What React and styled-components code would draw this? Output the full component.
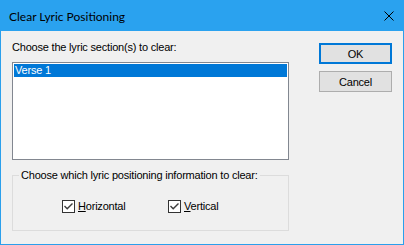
import styled, { createGlobalStyle } from "styled-components";

const GlobalStyle = createGlobalStyle`
  html, body {
    margin: 0;
    padding: 0;
    background: #ffffff;
  }
`;

function Check() {
  return (
    <svg width="11" height="11" viewBox="0 0 11 11">
      <path d="M1.5 5 L4.2 7.7 L9.5 2.4" stroke="#3c3c3c" strokeWidth="1.4" fill="none" />
    </svg>
  );
}

export default function App() {
  return (
    <>
      <GlobalStyle />
      <Window>
        <TitleBar>
          <Title>Clear Lyric Positioning</Title>
          <CloseButton aria-label="Close">
            <svg width="10" height="10" viewBox="0 0 10 10">
              <path d="M0.5 0.5 L9.5 9.5 M9.5 0.5 L0.5 9.5" stroke="#000" strokeWidth="1" fill="none" />
            </svg>
          </CloseButton>
        </TitleBar>
        <Body>
          <Main>
            <Label>Choose the lyric section(s) to clear:</Label>
            <ListBox>
              <ListItem $selected>Verse 1</ListItem>
            </ListBox>
            <GroupBox>
              <Legend>Choose which lyric positioning information to clear:</Legend>
              <CheckRow>
                <CheckItem>
                  <CheckBox>
                    <Check />
                  </CheckBox>
                  <span><u>H</u>orizontal</span>
                </CheckItem>
                <CheckItem>
                  <CheckBox>
                    <Check />
                  </CheckBox>
                  <span><u>V</u>ertical</span>
                </CheckItem>
              </CheckRow>
            </GroupBox>
          </Main>
          <Buttons>
            <Button $default>OK</Button>
            <Button>Cancel</Button>
          </Buttons>
        </Body>
      </Window>
    </>
  );
}

const Window = styled.div`
  width: 404px;
  height: 245px;
  box-sizing: border-box;
  border: 1px solid #2a9fec;
  border-top: none;
  background: #f0f0f0;
  display: flex;
  flex-direction: column;
  font-family: "Liberation Sans", Arial, sans-serif;
  font-size: 11px;
  letter-spacing: -0.2px;
  color: #000;
`;

const TitleBar = styled.div`
  height: 31px;
  margin: 0 -1px;
  background: #2aa2ef;
  display: flex;
  align-items: center;
  justify-content: space-between;
  padding: 0 10px 0 9px;
  box-sizing: border-box;
`;

const Title = styled.div`
  font-family: Lato, "Noto Sans", sans-serif;
  font-size: 12px;
  letter-spacing: 0;
  padding-top: 2px;
  color: #000;
`;

const CloseButton = styled.div`
  width: 10px;
  height: 10px;
  display: flex;
  margin-top: 1px;
`;

const Body = styled.div`
  flex: 1;
  display: flex;
  padding: 10px 0 0 11px;
`;

const Main = styled.div`
  width: 277px;
  display: flex;
  flex-direction: column;
`;

const Label = styled.div`
  line-height: 13px;
  height: 13px;
  margin-bottom: 8px;
`;

const ListBox = styled.div`
  height: 98px;
  box-sizing: border-box;
  border: 1px solid #828790;
  background: #ffffff;
  padding: 1px;
`;

const ListItem = styled.div`
  height: 13px;
  line-height: 13px;
  padding-left: 1px;
  background: ${(props) => (props.$selected ? "#0078d7" : "transparent")};
  color: ${(props) => (props.$selected ? "#ffffff" : "#000000")};
`;

const GroupBox = styled.fieldset`
  margin: 9px 0 0 0;
  padding: 0;
  border: 1px solid #dcdcdc;
  min-width: 0;
`;

const Legend = styled.legend`
  margin-left: 6px;
  padding: 0 2px;
  line-height: 13px;
`;

const CheckRow = styled.div`
  display: grid;
  grid-template-columns: 106px auto;
  height: 13px;
  margin: 18px 0 17px 49px;
`;

const CheckItem = styled.div`
  display: flex;
  align-items: center;
  gap: 3px;
  line-height: 13px;
`;

const CheckBox = styled.span`
  width: 13px;
  height: 13px;
  box-sizing: border-box;
  border: 1px solid #333333;
  background: #ffffff;
  display: flex;
  align-items: center;
  justify-content: center;
`;

const Buttons = styled.div`
  margin-left: 30px;
  padding-top: 2px;
  display: flex;
  flex-direction: column;
  gap: 7px;
`;

const Button = styled.div`
  width: 73px;
  height: 21px;
  box-sizing: border-box;
  border: ${(props) => (props.$default ? "2px solid #0078d7" : "1px solid #adadad")};
  background: #e1e1e1;
  display: flex;
  align-items: center;
  justify-content: center;
`;
